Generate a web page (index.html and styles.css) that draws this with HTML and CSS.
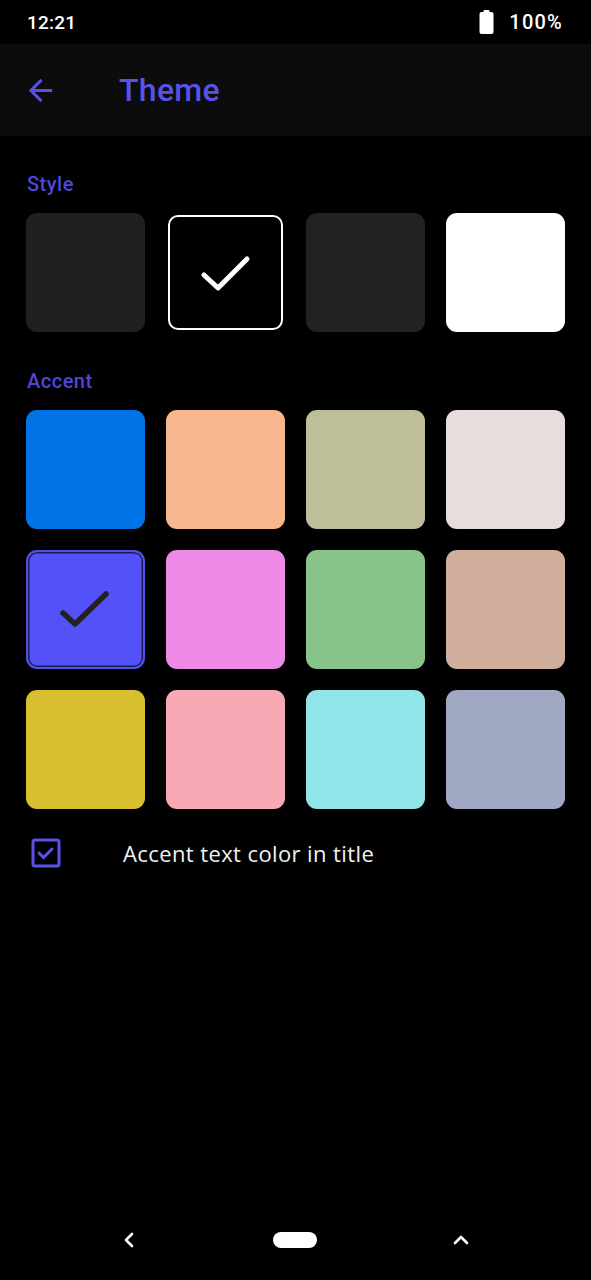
FILE: index.html
```html
<!DOCTYPE html>
<html>
<head>
<meta charset="utf-8">
<link rel="stylesheet" href="styles.css">
</head>
<body>
<div class="screen">
  <div class="statusbar">
    <span class="time">12:21</span>
    <div class="status-right">
      <svg class="battery" width="15" height="24" viewBox="0 0 15 24"><rect x="4.5" y="0" width="6" height="3" rx="1" fill="#fff"/><rect x="0.5" y="2" width="14" height="22" rx="2" fill="#fff"/></svg>
      <span class="pct">100%</span>
    </div>
  </div>
  <div class="appbar">
    <svg class="back" width="35" height="35" viewBox="0 0 24 24"><path d="M20 11H7.83l5.59-5.59L12 4l-8 8 8 8 1.41-1.41L7.83 13H20v-2z" fill="#5a52e8"/></svg>
    <span class="title">Theme</span>
  </div>
  <div class="content">
    <div class="label">Style</div>
    <div class="grid">
      <div class="tile s1"></div>
      <div class="tile s2 sel-style">
        <svg width="60" height="60" viewBox="0 0 60 60"><path d="M8 32 L22 45 L51 16" fill="none" stroke="#fff" stroke-width="5" stroke-linecap="round" stroke-linejoin="round"/></svg>
      </div>
      <div class="tile s3"></div>
      <div class="tile s4"></div>
    </div>
    <div class="label accent-label">Accent</div>
    <div class="grid">
      <div class="tile a1"></div>
      <div class="tile a2"></div>
      <div class="tile a3"></div>
      <div class="tile a4"></div>
      <div class="tile a5 sel-accent">
        <svg width="60" height="60" viewBox="0 0 60 60"><path d="M7 33 L19 44 L50 14" fill="none" stroke="#222" stroke-width="5.5" stroke-linecap="round" stroke-linejoin="round"/></svg>
      </div>
      <div class="tile a6"></div>
      <div class="tile a7"></div>
      <div class="tile a8"></div>
      <div class="tile a9"></div>
      <div class="tile a10"></div>
      <div class="tile a11"></div>
      <div class="tile a12"></div>
    </div>
    <div class="check-row">
      <svg class="checkbox" width="30" height="30" viewBox="0 0 30 30"><rect x="2" y="2" width="26" height="26" rx="2" fill="none" stroke="#5a52e8" stroke-width="3"/><path d="M8 15 L12.5 19.5 L21 11" fill="none" stroke="#5a52e8" stroke-width="3" stroke-linecap="round" stroke-linejoin="round"/></svg>
      <span class="check-text">Accent text color in title</span>
    </div>
  </div>
  <div class="navbar">
    <svg width="18" height="18" viewBox="0 0 18 18"><path d="M12 3 L6 9 L12 15" fill="none" stroke="#fff" stroke-width="2.6" stroke-linecap="round" stroke-linejoin="round"/></svg>
    <div class="pill"></div>
    <svg width="18" height="18" viewBox="0 0 18 18"><path d="M3 12 L9 6 L15 12" fill="none" stroke="#fff" stroke-width="2.6" stroke-linecap="round" stroke-linejoin="round"/></svg>
  </div>
</div>
</body>
</html>
```
FILE: styles.css
```css
html, body {
  margin: 0;
  padding: 0;
  background: #000;
}
.screen {
  width: 591px;
  height: 1280px;
  display: flex;
  flex-direction: column;
  background: #000;
  font-family: "Open Sans", "Roboto", sans-serif;
  color: #fff;
}
.statusbar {
  height: 44px;
  display: flex;
  align-items: center;
  justify-content: space-between;
  padding: 0 28px 0 27px;
  box-sizing: border-box;
}
.time {
  font-family: "Roboto", sans-serif;
  font-size: 19px;
  font-weight: 500;
  letter-spacing: 0.2px;
}
.status-right {
  display: flex;
  align-items: center;
  gap: 15px;
}
.battery {
  display: block;
}
.pct {
  font-family: "Roboto", sans-serif;
  font-size: 20px;
  font-weight: 500;
  letter-spacing: 1.2px;
}
.appbar {
  height: 92px;
  background: #0c0c0c;
  display: flex;
  align-items: center;
  padding-left: 23px;
  box-sizing: border-box;
}
.back {
  display: block;
}
.title {
  margin-left: 61px;
  font-family: "Roboto", sans-serif;
  font-size: 32px;
  font-weight: 500;
  color: #5a52e8;
  letter-spacing: 0.3px;
}
.content {
  flex: 1;
  padding: 0 26px;
}
.label {
  font-family: "Roboto", sans-serif;
  font-size: 20px;
  font-weight: 500;
  color: #4f47d8;
  margin-left: 1px;
  height: 24px;
  line-height: 24px;
  letter-spacing: 0.5px;
  margin-top: 36px;
  margin-bottom: 17px;
}
.accent-label {
  margin-top: 37px;
  margin-bottom: 17px;
}
.grid {
  display: grid;
  grid-template-columns: repeat(4, 119px);
  column-gap: 21px;
  row-gap: 21px;
}
.tile {
  height: 119px;
  border-radius: 11px;
  box-sizing: border-box;
  display: flex;
  align-items: center;
  justify-content: center;
}
.s1 { background: #221f1f; }
.s2 { background: #000; }
.s3 { background: #232222; }
.s4 { background: #fff; }
.sel-style {
  border: 2px solid #fff;
  margin: 2px;
  height: 115px;
  border-radius: 10px;
}
.a1 { background: #0073e6; }
.a2 { background: #f7b68d; }
.a3 { background: #bebe98; }
.a4 { background: #e6dedc; }
.a5 { background: #5352f8; }
.a6 { background: #ee8ae5; }
.a7 { background: #88c388; }
.a8 { background: #cfae9c; }
.a9 { background: #d8bf2f; }
.a10 { background: #f8a9b4; }
.a11 { background: #8fe5e8; }
.a12 { background: #a1a8c4; }
.sel-accent {
  border: 2px solid #5550e4;
  box-shadow: inset 0 0 0 1.5px #1c1a55;
}
.check-row {
  display: flex;
  align-items: center;
  margin-top: 29px;
  padding-left: 5px;
}
.checkbox {
  display: block;
}
.check-text {
  margin-left: 62px;
  font-family: "Open Sans", sans-serif;
  font-size: 22px;
  letter-spacing: 0.4px;
  color: #f2f2f2;
}
.navbar {
  height: 80px;
  display: flex;
  align-items: center;
  justify-content: space-between;
  padding: 0 121px 0 120px;
  box-sizing: border-box;
}
.navbar svg {
  display: block;
}
.pill {
  width: 44px;
  height: 16px;
  border-radius: 8px;
  background: #fff;
}
```
